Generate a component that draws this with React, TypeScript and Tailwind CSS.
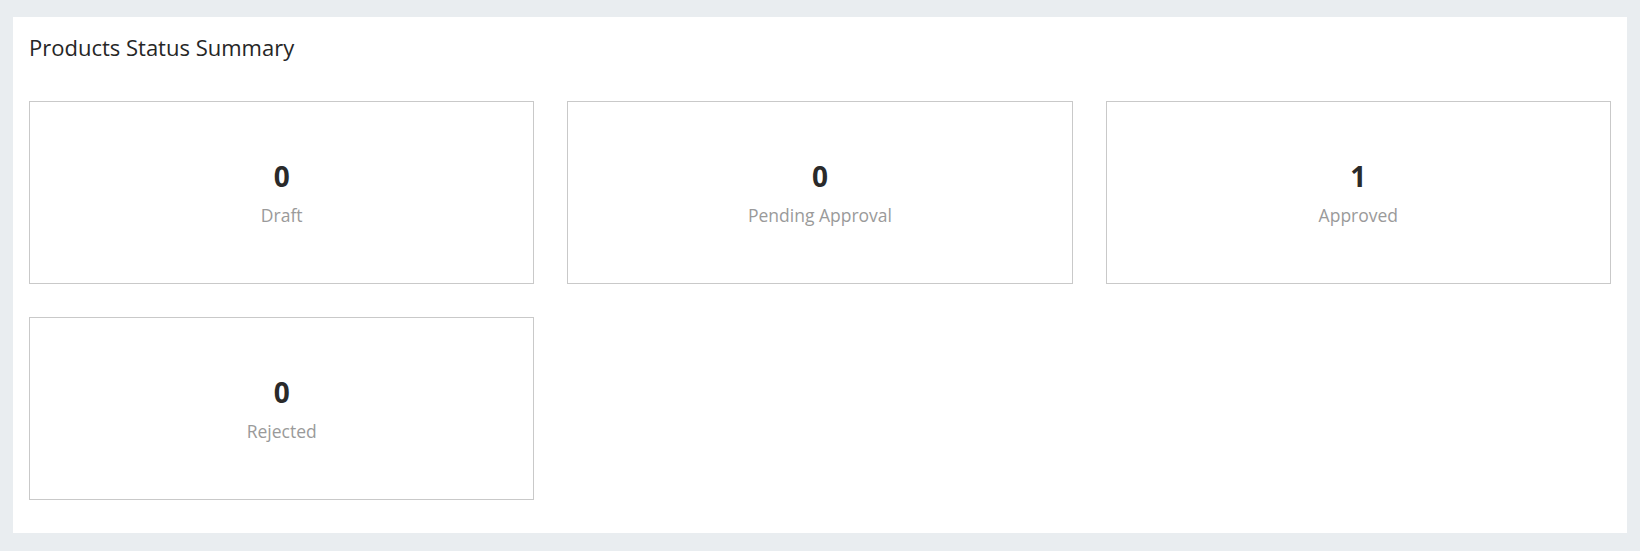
const stats = [
  { count: 0, label: "Draft" },
  { count: 0, label: "Pending Approval" },
  { count: 1, label: "Approved" },
  { count: 0, label: "Rejected" },
];

function StatCard({ count, label }: { count: number; label: string }) {
  return (
    <div className="flex h-[183px] flex-col items-center justify-center gap-2 border border-[#c9c9c9] bg-white">
      <div className="text-[28px] font-bold leading-[36px] text-[#2a2a2a]">{count}</div>
      <div className="text-[17.5px] leading-[26px] text-[#9a9a9a]">{label}</div>
    </div>
  );
}

export default function App() {
  return (
    <div
      className="flex h-screen w-full bg-[#e9edf0] pt-[17px] pl-[13px] pr-[13px] pb-[18px]"
      style={{ fontFamily: '"Open Sans", "Liberation Sans", sans-serif' }}
    >
      <div className="flex-1 bg-white px-4 pt-[15px]">
        <h1 className="text-[22px] leading-[30px] text-[#262626]">Products Status Summary</h1>
        <div className="mt-[39px] grid grid-cols-3 gap-[33px]">
          {stats.map((s) => (
            <StatCard key={s.label} count={s.count} label={s.label} />
          ))}
        </div>
      </div>
    </div>
  );
}
